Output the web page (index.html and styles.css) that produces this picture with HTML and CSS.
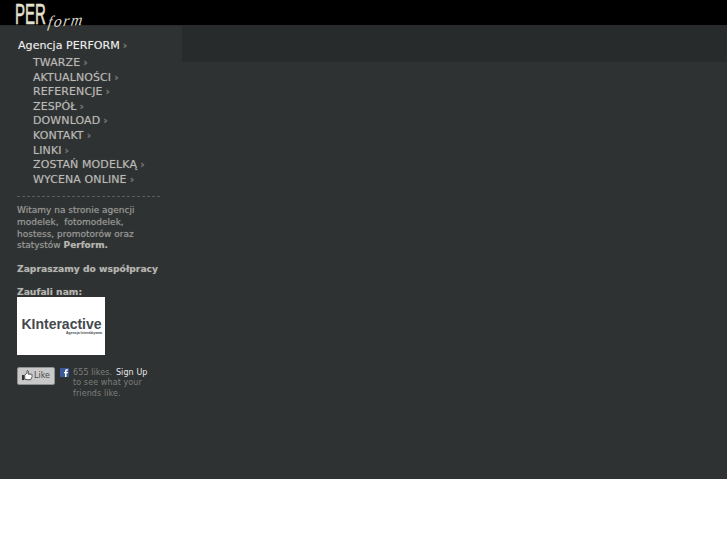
FILE: index.html
```html
<!DOCTYPE html>
<html lang="pl">
<head>
<meta charset="utf-8">
<title>Perform</title>
<link rel="stylesheet" href="styles.css">
</head>
<body>
<div class="page">
  <header class="top">
    <div class="logo"><span class="per">PER</span><span class="form">form</span></div>
  </header>
  <div class="main">
    <aside class="side">
      <div class="head-link">Agencja PERFORM<span class="arr">›</span></div>
      <ul class="menu">
        <li>TWARZE<span class="arr">›</span></li>
        <li>AKTUALNOŚCI<span class="arr">›</span></li>
        <li>REFERENCJE<span class="arr">›</span></li>
        <li>ZESPÓŁ<span class="arr">›</span></li>
        <li>DOWNLOAD<span class="arr">›</span></li>
        <li>KONTAKT<span class="arr">›</span></li>
        <li>LINKI<span class="arr">›</span></li>
        <li>ZOSTAŃ MODELKĄ<span class="arr">›</span></li>
        <li>WYCENA ONLINE<span class="arr">›</span></li>
      </ul>
      <p class="intro">Witamy na stronie agencji modelek,&nbsp; fotomodelek, hostess, promotorów oraz statystów <b>Perform.</b></p>
      <p class="invite"><b>Zapraszamy do współpracy</b></p>
      <p class="trust"><b>Zaufali nam:</b></p>
      <div class="partner"><span class="pname">KInteractive</span><span class="psub">Agencja Interaktywna</span></div>
      <div class="fb">
        <div class="like">
          <svg class="thumb" width="11" height="11" viewBox="0 0 12 12"><path fill="#2f3131" d="M0 5.500h2.500V11H0z"/><path fill="#fff" stroke="#2f3131" stroke-width=".9" d="M3 5.500 5.500 3V.8c1.300-.3 1.800.8 1.500 2L6.600 4.500h3.600c1 0 1.200 1.200.5 1.700.5.500.4 1.300-.2 1.600.3.600.1 1.200-.4 1.500.1.800-.4 1.300-1.100 1.300H5.500L3 10z"/></svg>Like
        </div>
        <svg class="fbicon" width="9" height="9" viewBox="0 0 9 9"><path fill="#3b5998" d="M0 0h9v9H0z"/><path fill="#fff" d="M5 9V5.200H4V3.900h1V3c0-1.100.7-1.700 1.600-1.700H8v1.300H7.100c-.5 0-.6.200-.6.600v.7H8l-.2 1.300H6.500V9z"/></svg>
        <div class="fbtext"><span class="likes">655 likes.</span> <span class="signup">Sign Up</span><br>to see what your<br>friends like.</div>
      </div>
    </aside>
    <div class="band"></div>
  </div>
</div>
</body>
</html>
```
FILE: styles.css
```css
html, body { margin: 0; padding: 0; background: #fff; }
body { font-family: "DejaVu Sans", sans-serif; }
.page { height: 479px; background: #2f3232; display: flex; flex-direction: column; overflow: hidden; }
.top { height: 26px; flex: none; background: #000; border-bottom: 1px solid #2a2c2c; box-sizing: border-box; }
.logo { position: relative; height: 25px; }
.per { position: absolute; left: 15px; top: 1px; font-family: "Liberation Sans", sans-serif; font-size: 30px; line-height: 26px; color: #e4e1cf; transform: scaleX(.5); transform-origin: left top; -webkit-text-stroke: .6px #e4e1cf; }
.form { position: absolute; left: 48px; top: 11px; font-family: "Liberation Serif", serif; font-style: italic; font-size: 16px; line-height: 20px; letter-spacing: 1.400px; color: #d8d6c8; transform: rotate(-4deg) skewX(-12deg); }
.main { display: flex; flex: 1; }
.side { width: 182px; flex: none; box-sizing: border-box; padding: 12px 0 0 17px; text-shadow: 0 0 1px rgba(200,200,195,.4); }
.band { flex: 1; height: 36px; background: #282b2b; }
.head-link { font-size: 11.100px; line-height: 15px; color: #eee; padding-left: 1px; }
.arr { color: #6e6f6f; font-weight: bold; margin-left: 3px; }
.menu { list-style: none; margin: 3px 0 0; padding: 0 0 0 16px; font-size: 11px; letter-spacing: .1px; line-height: 14.600px; color: #b9b9b5; }
.intro, .invite, .trust { margin: 0; font-size: 9px; line-height: 11.600px; color: #999a96; width: 126px; }
.intro { margin-top: 9px; border-top: 1px dashed #5a5c5c; width: 143px; padding: 8px 10px 0 0; box-sizing: border-box; }
.intro b, .invite, .trust { color: #b5b5b0; }
.invite { margin-top: 11px; width: 150px; white-space: nowrap; font-size: 9.200px; }
.trust { margin-top: 12px; font-size: 9.200px; }
.partner { width: 88px; height: 58px; margin-top: -1px; background: #fff; display: flex; flex-direction: column; align-items: center; justify-content: center; font-family: "Liberation Sans", sans-serif; text-shadow: none; }
.pname { font-size: 14px; line-height: 13px; font-weight: bold; color: #45494d; margin: 2px 0 0 1px; }
.psub { font-size: 3.500px; line-height: 4px; color: #45494d; align-self: flex-end; margin-right: 3px; font-weight: bold; }
.fb { display: flex; align-items: flex-start; margin-top: 12px; text-shadow: none; }
.like { width: 38px; height: 18px; box-sizing: border-box; border-radius: 2px; background: #c9c9c9; color: #4a4c4c; display: flex; align-items: center; justify-content: center; gap: 1px; font-family: "DejaVu Sans", sans-serif; font-size: 8px; border: 1px solid #8f9090; }
.thumb { flex: none; }
.fbicon { flex: none; margin: 1px 0 0 5px; }
.fbtext { width: 84px; margin: 1px 0 0 4px; font-size: 8px; line-height: 10.300px; color: #7d7e7c; letter-spacing: .1px; white-space: nowrap; }
.signup { color: #e8e8e8; margin-left: 1px; }
```
